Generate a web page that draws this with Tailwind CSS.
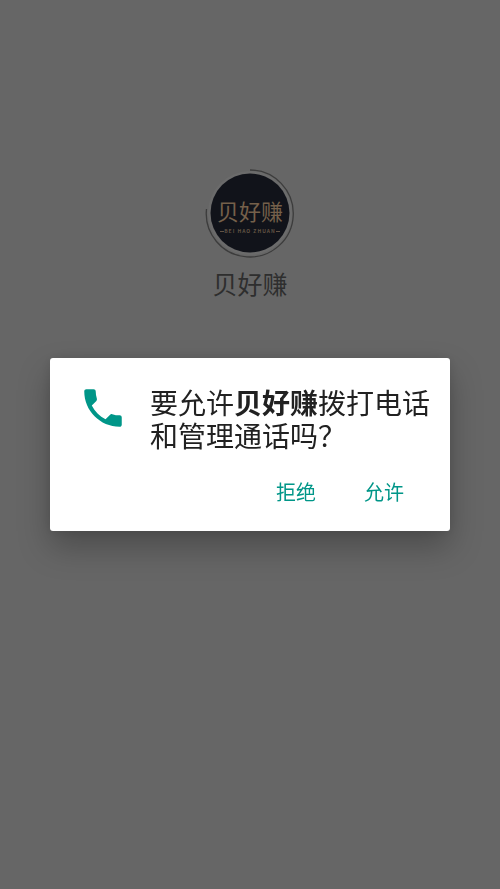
<!doctype html>
<html lang="zh-CN">
  <head>
    <meta charset="UTF-8" />
    <meta name="viewport" content="width=device-width, initial-scale=1.0" />
    <title>贝好赚</title>
    <script src="https://cdn.jsdelivr.net/npm/@tailwindcss/browser@4"></script>
  </head>
  <body class="min-h-screen bg-[#666666] font-['Noto_Sans_CJK_SC',sans-serif]">
    <!-- Splash -->
    <main class="flex flex-col items-center pt-[168px]">
      <svg class="size-[90px]" viewBox="0 0 90 90" role="img" aria-label="贝好赚">
        <circle cx="45" cy="45" r="42" fill="#6b6b6b" />
        <path
          d="M45 2A43.5 43.5 0 1 1 1.500 41"
          fill="none"
          stroke="#3c3c3c"
          stroke-width="1.300"
        />
        <circle cx="45" cy="45" r="39.500" fill="#11131a" />
        <text x="45" y="52" text-anchor="middle" font-size="22" fill="#75604a">贝好赚</text>
        <path d="M15 63.500h4M71 63.500h4" stroke="#625344" stroke-width="1" />
        <text x="45" y="65" text-anchor="middle" font-size="5" font-weight="700" letter-spacing="1" fill="#625344">BEI HAO ZHUAN</text>
      </svg>
      <h1 class="mt-[7px] text-[25px] leading-9 text-[#2e2e2e]">贝好赚</h1>
    </main>

    <!-- Permission dialog -->
    <div class="fixed inset-0 flex items-center justify-center px-[50px]">
      <div
        role="dialog"
        aria-modal="true"
        aria-labelledby="permission-text"
        class="w-full max-w-md rounded-[3px] bg-white pb-[19px] shadow-[0_16px_32px_rgba(0,0,0,0.26),0_0_12px_rgba(0,0,0,0.1)]"
      >
        <div class="flex items-start pt-7 pr-4 pl-7">
          <svg
            class="-mt-[3px] mr-[22px] size-[50px] shrink-0 fill-[#009688]"
            viewBox="0 0 24 24"
            aria-hidden="true"
          >
            <path
              d="M6.620 10.790c1.440 2.830 3.760 5.140 6.590 6.590l2.200-2.200c.27-.27.67-.36 1.020-.24 1.120.37 2.330.57 3.570.57.55 0 1 .45 1 1V20c0 .55-.45 1-1 1-9.390 0-17-7.610-17-17 0-.55.45-1 1-1h3.500c.55 0 1 .45 1 1 0 1.250.2 2.450.57 3.570.11.35.03.74-.25 1.020l-2.200 2.200z"
            />
          </svg>
          <p id="permission-text" class="text-[28px] leading-[33px] text-[#212121]">
            要允许<b class="font-bold">贝好赚</b>拨打电话和管理通话吗？
          </p>
        </div>
        <div class="mt-5 flex justify-end pr-[22px]">
          <button type="button" class="h-10 px-6 text-xl text-[#009688]">拒绝</button>
          <button type="button" class="h-10 px-6 text-xl text-[#009688]">允许</button>
        </div>
      </div>
    </div>
  </body>
</html>
